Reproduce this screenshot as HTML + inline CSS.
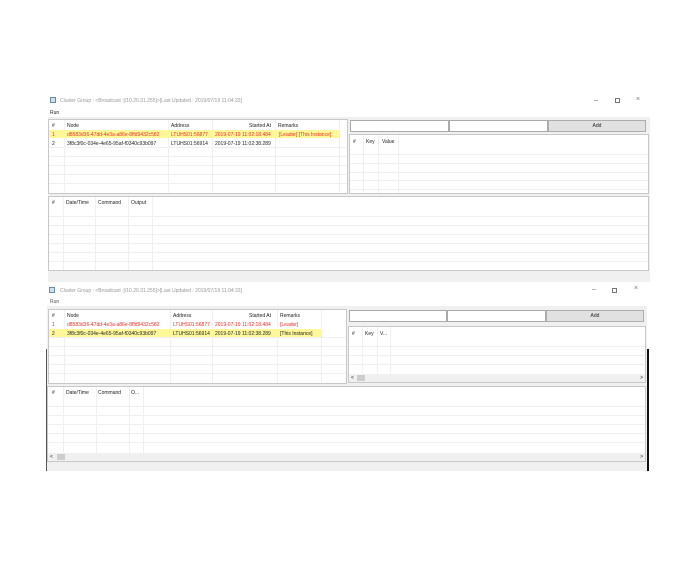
<!DOCTYPE html>
<html><head><meta charset="utf-8"><style>
*{margin:0;padding:0;box-sizing:border-box}
body{width:696px;height:564px;background:#fff;position:relative;overflow:hidden;font-family:"Liberation Sans",sans-serif;font-size:5px;color:#222}
.a{position:absolute}
.gray{background:#f0f0f0}
.box{position:absolute;background:#fff;border:1px solid #c8c8c8}
.vl{position:absolute;top:0;bottom:0;width:1px;background:#eef0f6}
.hl{position:absolute;left:0;right:0;height:1px;background:#f0f0f0}
.t{position:absolute;white-space:nowrap;line-height:6px}
.tb{position:absolute;background:#fff;border:1px solid #aaa;height:12px}
.btn{position:absolute;background:#e1e1e1;border:1px solid #adadad;height:12px;text-align:center;line-height:10px}
.ttl{color:#999}
.red{color:#e8302a}
.sb{position:absolute;left:0;right:0;height:8px;background:#f0f0f0}
</style></head><body>

<!-- Window 1 -->
<div class="a gray" style="left:48px;top:117px;width:602px;height:165px"></div>
<div class="a" style="left:50px;top:97px;width:6px;height:6px;border:1px solid #6a8aa0;background:#cfe0ea"></div>
<div class="t ttl" style="left:60px;top:98px">Cluster Group : &lt;Broadcast :[/10.20.31.255]&gt;[Last Updated : 2019/07/19 11:04:33]</div>
<div class="t" style="left:50px;top:110px">Run</div>
<div class="t" style="left:594px;top:98px;color:#666;font-size:7px">&#8211;</div>
<div class="a" style="left:615px;top:98px;width:5px;height:5px;border:1px solid #777"></div>
<div class="t" style="left:636px;top:97px;color:#777;font-size:7px">&#215;</div>

<div class="box" style="left:48px;top:119px;width:300px;height:75px">
 <div class="vl" style="left:15px"></div><div class="vl" style="left:119px"></div><div class="vl" style="left:163px"></div><div class="vl" style="left:226px"></div><div class="vl" style="left:290px"></div>
 <div class="a" style="left:0;top:10px;width:290px;height:8px;background:#fff89a"></div>
 <div class="hl" style="top:27px"></div><div class="hl" style="top:36px"></div><div class="hl" style="top:45px"></div><div class="hl" style="top:54px"></div><div class="hl" style="top:63px"></div>
 <div class="t" style="left:3px;top:3px">#</div><div class="t" style="left:18px;top:3px">Node</div><div class="t" style="left:122px;top:3px">Address</div><div class="t" style="left:200px;top:3px">Started At</div><div class="t" style="left:229px;top:3px">Remarks</div>
 <div class="t red" style="left:3px;top:12px">1</div><div class="t red" style="left:18px;top:12px">d8583d36-47dd-4e3a-a86e-8ffd9432c582</div><div class="t red" style="left:122px;top:12px">LTUHS01:56877</div><div class="t red" style="left:166px;top:12px">2019-07-19 11:02:18.484</div><div class="t red" style="left:230px;top:12px">[Leader] [This Instance]</div>
 <div class="t" style="left:3px;top:21px">2</div><div class="t" style="left:18px;top:21px">3f8c3f0c-034e-4e65-95af-f0340c93b097</div><div class="t" style="left:122px;top:21px">LTUHS01:56914</div><div class="t" style="left:166px;top:21px">2019-07-19 11:02:38.289</div>
</div>
<div class="tb" style="left:350px;top:120px;width:99px"></div>
<div class="tb" style="left:449px;top:120px;width:99px"></div>
<div class="btn" style="left:548px;top:120px;width:98px">Add</div>
<div class="box" style="left:349px;top:134px;width:300px;height:60px">
 <div class="vl" style="left:13px"></div><div class="vl" style="left:28px"></div><div class="vl" style="left:48px"></div>
 <div class="hl" style="top:19px"></div><div class="hl" style="top:28px"></div><div class="hl" style="top:37px"></div><div class="hl" style="top:45px"></div><div class="hl" style="top:54px"></div>
 <div class="t" style="left:3px;top:4px">#</div><div class="t" style="left:16px;top:4px">Key</div><div class="t" style="left:32px;top:4px">Value</div>
</div>
<div class="box" style="left:48px;top:196px;width:601px;height:75px">
 <div class="vl" style="left:14px"></div><div class="vl" style="left:46px"></div><div class="vl" style="left:79px"></div><div class="vl" style="left:103px"></div>
 <div class="hl" style="top:19px"></div><div class="hl" style="top:28px"></div><div class="hl" style="top:37px"></div><div class="hl" style="top:46px"></div><div class="hl" style="top:55px"></div><div class="hl" style="top:64px"></div>
 <div class="t" style="left:3px;top:3px">#</div><div class="t" style="left:17px;top:3px">Date/Time</div><div class="t" style="left:49px;top:3px">Command</div><div class="t" style="left:82px;top:3px">Output</div>
</div>

<!-- Window 2 -->
<div class="a" style="left:46px;top:349px;width:1px;height:122px;background:#555"></div>
<div class="a gray" style="left:47px;top:306px;width:600px;height:165px"></div>
<div class="a" style="left:647px;top:349px;width:2px;height:122px;background:#111"></div>
<div class="a" style="left:49px;top:287px;width:6px;height:6px;border:1px solid #6a8aa0;background:#cfe0ea"></div>
<div class="t ttl" style="left:60px;top:288px">Cluster Group : &lt;Broadcast :[/10.20.31.255]&gt;[Last Updated : 2019/07/19 11:04:33]</div>
<div class="t" style="left:50px;top:299px;color:#555">Run</div>
<div class="t" style="left:592px;top:287px;color:#666;font-size:7px">&#8211;</div>
<div class="a" style="left:612px;top:288px;width:5px;height:5px;border:1px solid #777"></div>
<div class="t" style="left:634px;top:286px;color:#777;font-size:7px">&#215;</div>

<div class="box" style="left:48px;top:309px;width:299px;height:75px">
 <div class="vl" style="left:15px"></div><div class="vl" style="left:121px"></div><div class="vl" style="left:163px"></div><div class="vl" style="left:228px"></div><div class="vl" style="left:272px"></div>
 <div class="a" style="left:0;top:19px;width:272px;height:8px;background:#fff89a"></div>
 <div class="hl" style="top:27px"></div><div class="hl" style="top:36px"></div><div class="hl" style="top:45px"></div><div class="hl" style="top:54px"></div><div class="hl" style="top:63px"></div>
 <div class="t" style="left:3px;top:3px">#</div><div class="t" style="left:18px;top:3px">Node</div><div class="t" style="left:124px;top:3px">Address</div><div class="t" style="left:200px;top:3px">Started At</div><div class="t" style="left:231px;top:3px">Remarks</div>
 <div class="t red" style="left:3px;top:12px">1</div><div class="t red" style="left:18px;top:12px">d8583d36-47dd-4e3a-a86e-8ffd9432c582</div><div class="t red" style="left:124px;top:12px">LTUHS01:56877</div><div class="t red" style="left:166px;top:12px">2019-07-19 11:02:18.484</div><div class="t red" style="left:231px;top:12px">[Leader]</div>
 <div class="t" style="left:3px;top:21px">2</div><div class="t" style="left:18px;top:21px">3f8c3f0c-034e-4e65-95af-f0340c93b097</div><div class="t" style="left:124px;top:21px">LTUHS01:56914</div><div class="t" style="left:166px;top:21px">2019-07-19 11:02:38.289</div><div class="t" style="left:231px;top:21px">[This Instance]</div>
</div>
<div class="tb" style="left:349px;top:310px;width:98px"></div>
<div class="tb" style="left:447px;top:310px;width:99px"></div>
<div class="btn" style="left:546px;top:310px;width:98px">Add</div>
<div class="box" style="left:348px;top:326px;width:298px;height:57px">
 <div class="vl" style="left:13px"></div><div class="vl" style="left:28px"></div><div class="vl" style="left:41px"></div>
 <div class="hl" style="top:19px"></div><div class="hl" style="top:28px"></div><div class="hl" style="top:37px"></div>
 <div class="t" style="left:3px;top:4px">#</div><div class="t" style="left:16px;top:4px">Key</div><div class="t" style="left:31px;top:4px">V...</div>
 <div class="sb" style="top:47px"><div class="t" style="left:2px;top:1px">&lt;</div><div class="a" style="left:8px;top:1px;width:8px;height:6px;background:#cdcdcd"></div><div class="t" style="right:2px;top:1px">&gt;</div></div>
</div>
<div class="box" style="left:47px;top:386px;width:599px;height:76px">
 <div class="vl" style="left:15px"></div><div class="vl" style="left:48px"></div><div class="vl" style="left:81px"></div><div class="vl" style="left:95px"></div>
 <div class="hl" style="top:19px"></div><div class="hl" style="top:28px"></div><div class="hl" style="top:37px"></div><div class="hl" style="top:46px"></div><div class="hl" style="top:55px"></div>
 <div class="t" style="left:4px;top:3px">#</div><div class="t" style="left:18px;top:3px">Date/Time</div><div class="t" style="left:50px;top:3px">Command</div><div class="t" style="left:83px;top:3px">O...</div>
 <div class="sb" style="top:66px"><div class="t" style="left:2px;top:1px">&lt;</div><div class="a" style="left:9px;top:1px;width:8px;height:6px;background:#cdcdcd"></div><div class="t" style="right:2px;top:1px">&gt;</div></div>
</div>
</body></html>
